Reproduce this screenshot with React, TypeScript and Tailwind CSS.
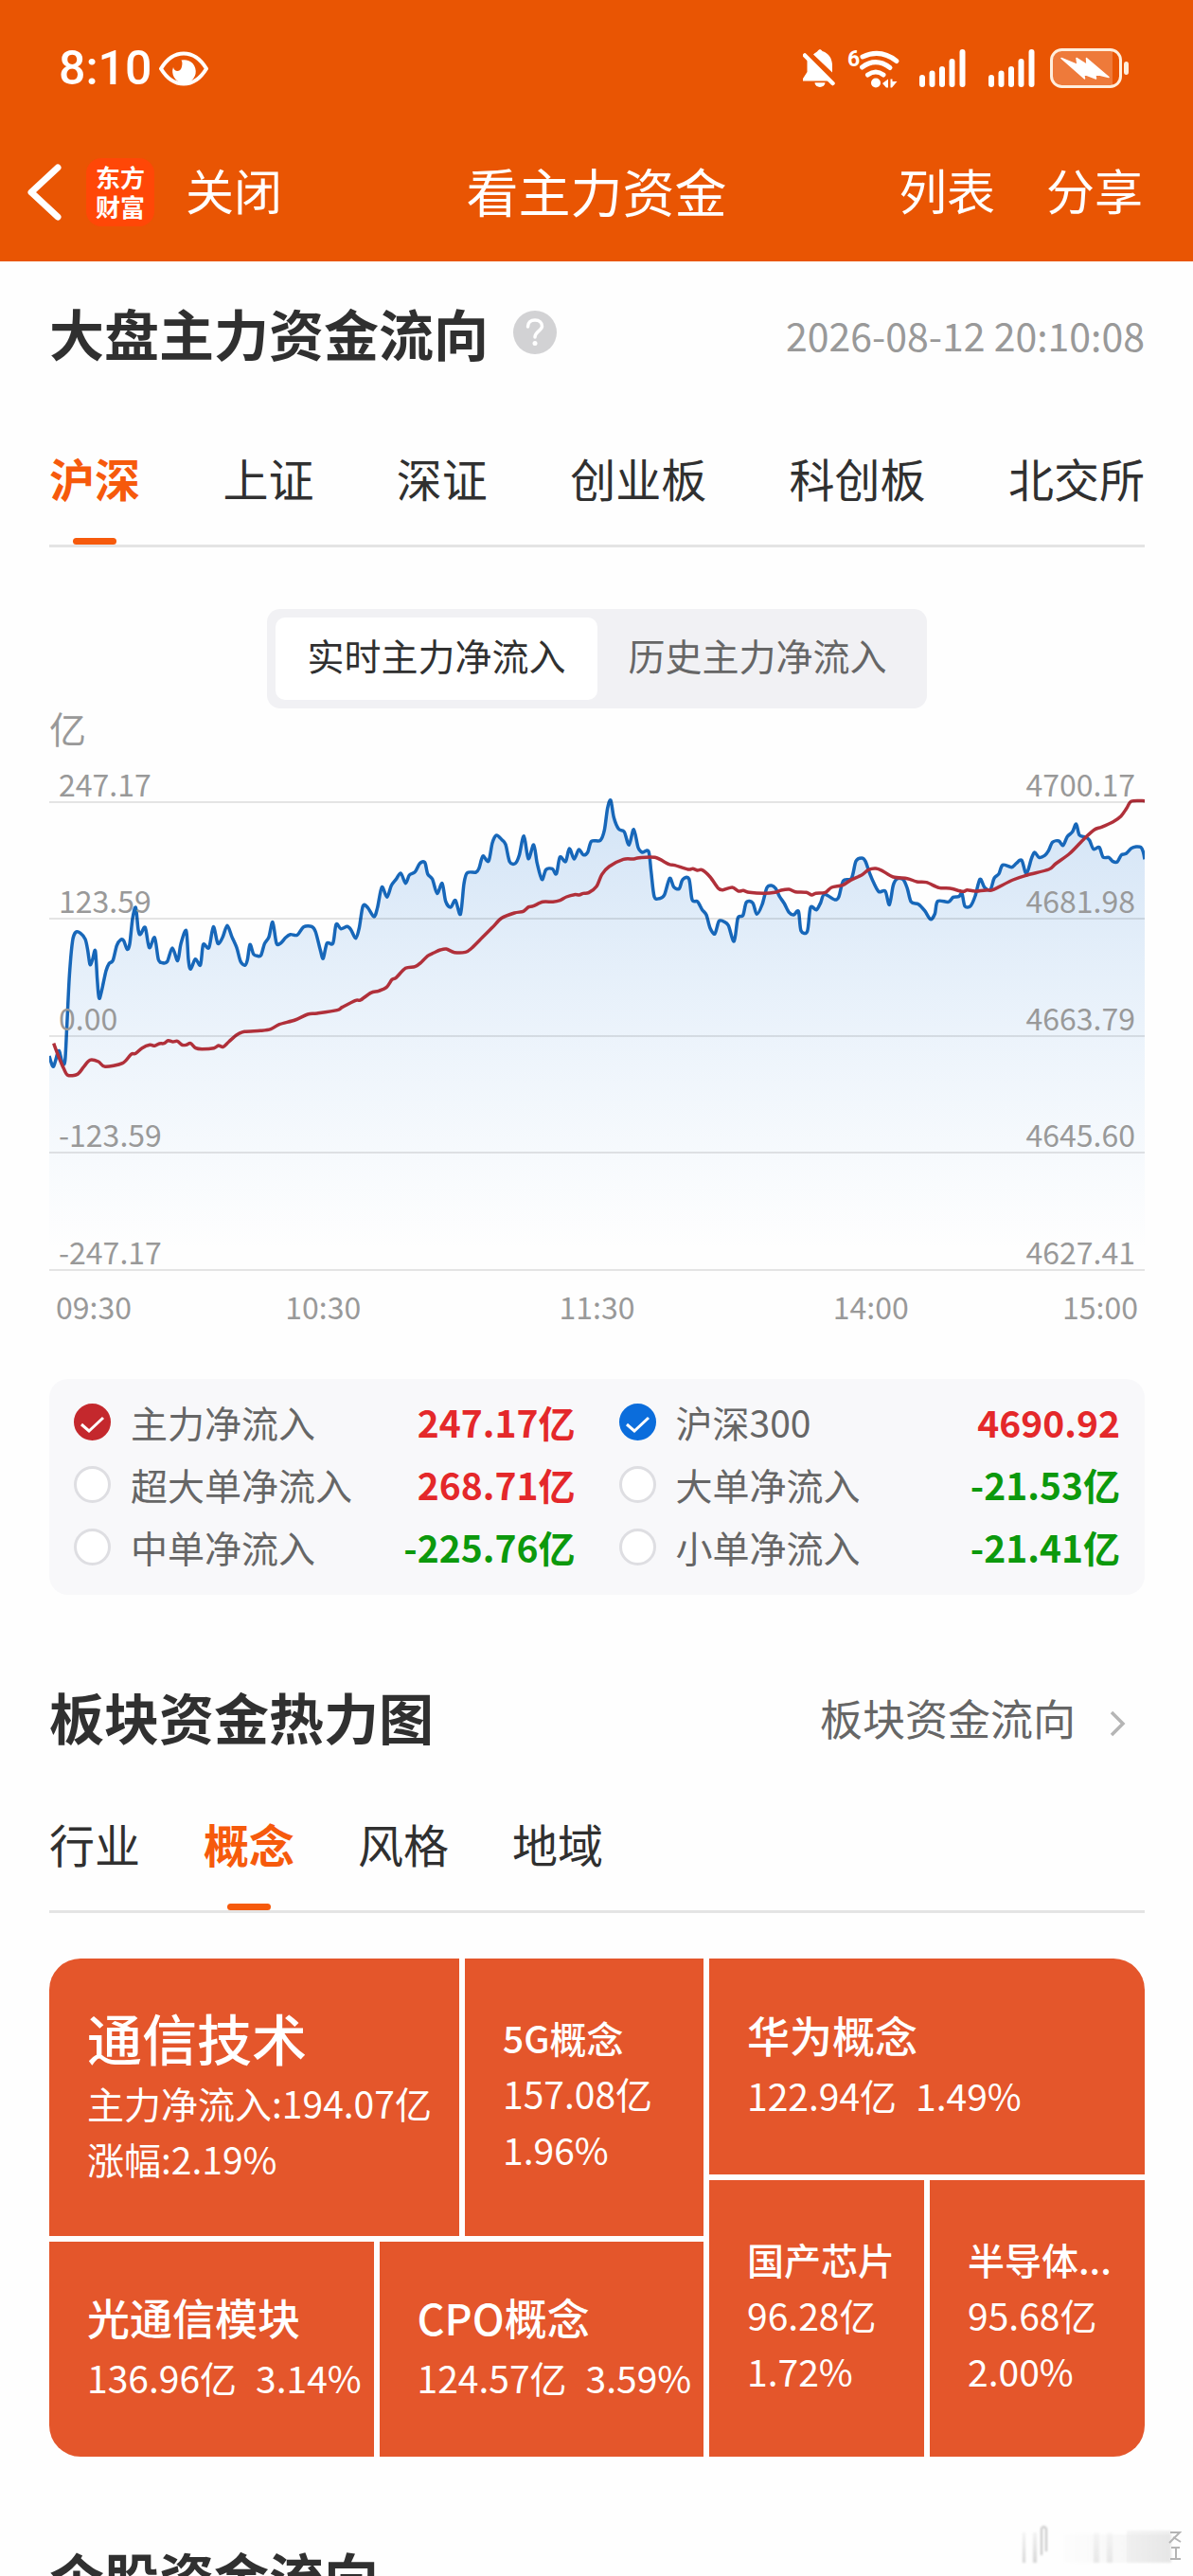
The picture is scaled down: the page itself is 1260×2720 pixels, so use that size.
import { useState } from "react";

type Point = [number, number];

const shift = (points: Point[], dx: number): Point[] => points.map(([x, y]) => [x + dx, y]);

const FUND_LINE: Point[] = [
  [66, 945], [72, 965], [80, 978], [92, 938], [98, 930], [108, 968], [116, 960], [122, 850], [130, 690], [140, 580],
  [150, 553], [165, 556], [180, 575], [188, 610], [195, 655], [203, 640], [212, 612], [218, 700], [222, 750], [226, 762],
  [234, 730], [246, 675], [256, 652], [268, 642], [280, 595], [292, 577], [302, 580], [313, 607], [321, 590], [330, 510],
  [340, 475], [348, 545], [355, 560], [370, 538], [383, 602], [400, 570], [412, 640], [425, 650], [440, 646], [456, 603],
  [473, 643], [483, 590], [500, 548], [507, 640], [514, 670], [529, 638], [545, 657], [554, 592], [572, 602], [586, 536],
  [600, 588], [615, 570], [630, 532], [645, 568], [660, 602], [672, 645], [686, 658], [694, 640], [702, 592], [713, 622],
  [725, 628], [737, 626], [748, 590], [762, 568], [774, 521], [786, 588], [800, 587], [815, 570], [830, 560], [852, 562],
  [872, 536], [898, 535], [910, 552], [925, 610], [934, 636], [946, 588], [965, 588], [975, 528], [990, 542], [1010, 535],
  [1022, 545], [1037, 572], [1048, 540], [1060, 470], [1075, 475], [1095, 504], [1106, 475], [1120, 410], [1136, 442],
  [1150, 405], [1165, 385], [1180, 366], [1195, 398], [1207, 372], [1225, 362], [1240, 335], [1256, 332],
  ...shift(
    [
      [65, 368], [80, 385], [95, 430], [111, 398], [122, 455], [138, 474], [153, 452], [169, 496], [180, 400], [190, 365],
      [218, 363], [228, 350], [240, 312], [258, 328], [270, 270], [283, 246], [300, 260], [312, 275], [325, 330], [343, 335],
      [355, 310], [370, 248], [384, 320], [401, 276], [412, 335], [427, 386], [440, 355], [460, 352], [473, 368], [484, 315],
      [502, 329], [514, 288], [529, 321], [544, 291], [558, 308], [572, 300], [584, 265], [612, 262], [625, 230], [635, 160],
      [645, 135], [655, 190], [670, 226], [688, 235], [703, 277], [718, 227], [732, 285], [745, 300], [765, 297], [773, 360],
      [783, 440], [800, 446], [815, 435], [832, 382], [845, 410], [862, 415], [873, 386], [893, 384], [903, 450], [920, 456],
      [935, 482], [948, 498], [960, 540], [975, 558], [988, 518], [1005, 520], [1018, 532], [1036, 582], [1048, 508],
      [1064, 500], [1075, 458], [1095, 460], [1108, 496], [1125, 465], [1140, 412], [1155, 405], [1168, 415], [1180, 440],
      [1195, 462], [1210, 490], [1225, 498], [1240, 487],
    ],
    1200,
  ),
  ...shift(
    [
      [48, 548], [68, 550], [78, 475], [97, 482], [110, 460], [122, 433], [155, 450], [168, 440], [182, 390], [208, 382],
      [222, 328], [240, 318], [252, 328], [265, 365], [280, 400], [295, 425], [315, 423], [328, 466], [340, 405], [352, 384],
      [372, 386], [385, 415], [397, 457], [420, 464], [440, 485], [458, 512], [472, 495], [481, 455], [515, 457], [530, 442],
      [548, 440], [558, 430], [567, 470], [585, 470], [600, 438], [615, 385], [630, 412], [648, 418], [660, 382], [675, 368],
      [687, 340], [715, 347], [730, 335], [747, 325], [762, 368], [778, 320], [788, 300], [802, 316], [820, 310], [832, 295],
      [845, 268], [865, 264], [878, 278], [892, 250], [908, 235], [920, 210], [930, 245], [950, 252], [962, 262], [975, 290],
      [993, 284], [1005, 315], [1023, 316], [1035, 328], [1050, 330], [1063, 308], [1078, 304], [1095, 287], [1110, 282],
      [1125, 284], [1132, 298], [1137, 322],
    ],
    2400,
  ),
];

const INDEX_LINE: Point[] = [
  [80, 905], [95, 945], [112, 985], [125, 1006], [155, 1003], [175, 980], [195, 958], [222, 963], [243, 979], [298, 968],
  [325, 940], [340, 937], [360, 920], [385, 910], [400, 913], [415, 906], [430, 905], [443, 896], [458, 900], [472, 898],
  [487, 910], [500, 910], [514, 905], [530, 920], [550, 923], [588, 920], [602, 912], [617, 916], [635, 900], [660, 878],
  [685, 868], [735, 865], [768, 860], [795, 845], [845, 831], [885, 813], [915, 810], [978, 800], [995, 790], [1037, 769],
  [1052, 768], [1085, 745], [1110, 739], [1135, 727], [1152, 703], [1165, 697], [1195, 667], [1225, 662], [1245, 648],
  ...shift(
    [
      [65, 628], [85, 618], [105, 609], [124, 606], [150, 617], [185, 616], [205, 603], [240, 568], [270, 538], [300, 508],
      [340, 492], [368, 487], [385, 473], [400, 470], [430, 457], [462, 457], [485, 452], [505, 441], [530, 434], [545, 435],
      [558, 430], [575, 428], [600, 408], [617, 370], [640, 345], [685, 322], [718, 321], [735, 317], [785, 316], [830, 338],
      [848, 341], [890, 354], [905, 352], [920, 357], [935, 356], [960, 378], [985, 413], [1000, 419], [1030, 411],
      [1050, 423], [1065, 421], [1085, 427], [1130, 430], [1165, 427], [1185, 420], [1210, 417], [1230, 425],
    ],
    1200,
  ),
  ...shift(
    [
      [65, 427], [82, 435], [95, 430], [125, 427], [145, 411], [180, 404], [205, 388], [240, 372], [262, 355], [285, 351],
      [305, 358], [340, 378], [385, 383], [415, 393], [445, 395], [485, 412], [520, 414], [560, 424], [575, 419], [600, 423],
      [640, 419], [655, 419], [720, 387], [765, 372], [833, 354], [855, 336], [900, 303], [945, 257], [978, 228], [1000, 220],
      [1037, 203], [1062, 185], [1080, 160], [1095, 138], [1137, 137],
    ],
    2400,
  ),
];

function smoothPath(points: Point[]): string {
  const k = 0.15;
  let d = `M${points[0][0]} ${points[0][1]}`;
  for (let i = 0; i < points.length - 1; i++) {
    const p0 = points[i - 1] ?? points[i];
    const p1 = points[i];
    const p2 = points[i + 1];
    const p3 = points[i + 2] ?? p2;
    d += `C${p1[0] + (p2[0] - p0[0]) * k} ${p1[1] + (p2[1] - p0[1]) * k} ${p2[0] - (p3[0] - p1[0]) * k} ${p2[1] - (p3[1] - p1[1]) * k} ${p2[0]} ${p2[1]}`;
  }
  return d;
}

const GRID_ROWS = [
  { left: "247.17", right: "4700.17", height: "h-[48px]" },
  { left: "123.59", right: "4681.98", height: "h-[123px]" },
  { left: "0.00", right: "4663.79", height: "h-[124px]" },
  { left: "-123.59", right: "4645.60", height: "h-[123px]" },
  { left: "-247.17", right: "4627.41", height: "h-[124px]" },
];

function EyeIcon() {
  return (
    <svg className="h-[37px] w-[52px]" viewBox="0 0 52 37" fill="none" aria-hidden="true">
      <path d="M2 18.500C9 7 17 2.500 26 2.500S43 7 50 18.500C43 30 35 34.500 26 34.500S9 30 2 18.500Z" stroke="white" strokeWidth="4" strokeLinejoin="round" />
      <path d="M23.500 9.500A12.300 12.300 0 1 1 15 17C16 22 22 22 23.500 18C24.500 15 25 11.500 23.500 9.500Z" fill="white" />
    </svg>
  );
}

function BellOffIcon() {
  return (
    <svg className="h-[40px] w-[34px]" viewBox="0 0 34 40" fill="white" aria-hidden="true">
      <path d="M2 6.500 31.500 36" stroke="white" strokeWidth="4.500" strokeLinecap="round" />
      <path d="M4.500 11V24L0 31V33.500H28Z" />
      <path d="M11 5.500C13 3.500 14.500 3 15.500 2 17-.3 19-.3 20.500 2 28 4.500 30.500 10 31 16V24.500Z" />
      <path d="M12.500 35.300H23.500A5.500 4.700 0 0 1 12.500 35.300Z" />
    </svg>
  );
}

function WifiIcon() {
  return (
    <svg className="h-[42px] w-[56px] overflow-visible" viewBox="0 0 56 42" fill="none" aria-hidden="true">
      <text x="0" y="19" fill="white" fontSize="23" fontWeight="700" fontFamily="Roboto, sans-serif">6</text>
      <g stroke="white" strokeWidth="5" strokeLinecap="round">
        <path d="M16 9Q35 0 52 13.500" />
        <path d="M15.500 20Q30 9 45 20.500" />
        <path d="M21.500 28Q30 22 38 28" />
      </g>
      <circle cx="30" cy="36.500" r="5" fill="white" />
      <path d="M37 37 43 32.500V41.500H41ZM45.500 32.500H47.500V35L52.500 35 47 41.500H45.500Z" fill="white" />
    </svg>
  );
}

function SignalIcon() {
  return (
    <svg className="h-[40px] w-[49px]" viewBox="0 0 49 40" fill="white" aria-hidden="true">
      <rect x="0" y="27" width="6" height="13" rx="3" />
      <rect x="10.500" y="22.500" width="6" height="17.500" rx="3" />
      <rect x="21" y="18" width="6" height="22" rx="3" />
      <rect x="31.500" y="10" width="6" height="30" rx="3" />
      <rect x="42.500" y="0" width="6" height="40" rx="3" />
    </svg>
  );
}

function BatteryIcon() {
  return (
    <svg className="h-[44px] w-[84px]" viewBox="0 0 84 44" fill="none" aria-hidden="true">
      <path d="M12 3H66V41H12A10 10 0 0 1 2 31V13A10 10 0 0 1 12 3Z" fill="white" fillOpacity="0.220" />
      <rect x="1.500" y="2.500" width="73" height="39" rx="11" stroke="#FFEEDC" strokeWidth="3" />
      <path d="M78 18Q78 15 80.500 15T83 18V26Q83 29 80.500 29T78 26Z" fill="#FFEEDC" />
      <path d="M12 11.500 29 18.500 28 11.500 39 18.500 38.500 11.500 62 31.500 47.500 28 48.500 33 35.500 28 36.500 33Z" fill="white" stroke="white" strokeWidth="1.500" strokeLinejoin="round" />
    </svg>
  );
}

function TabBar({ tabs, initial, layout, label }: { tabs: string[]; initial: string; layout: string; label: string }) {
  const [active, setActive] = useState(initial);
  return (
    <div role="tablist" aria-label={label} className={`flex border-b-[3px] border-[#e4e4e4] ${layout}`}>
      {tabs.map((tab) => {
        const on = tab === active;
        return (
          <button
            key={tab}
            type="button"
            role="tab"
            aria-selected={on}
            onClick={() => setActive(tab)}
            className={`relative pb-[41px] text-[48px] leading-[60px] whitespace-nowrap ${on ? "font-bold text-[#F65A0C]" : "text-[#303030]"}`}
          >
            {tab}
            {on && <span className="absolute bottom-0 left-1/2 h-[7px] w-[46px] -translate-x-1/2 rounded-full bg-[#F65A0C]" />}
          </button>
        );
      })}
    </div>
  );
}

type Series = { name: string; value: string; color: string; dot?: string };

const SERIES: Series[] = [
  { name: "主力净流入", value: "247.17亿", color: "text-[#E4282A]", dot: "checked:border-[#C4282D] checked:bg-[#C4282D]" },
  { name: "沪深300", value: "4690.92", color: "text-[#E4282A]", dot: "checked:border-[#0B6DDC] checked:bg-[#0B6DDC]" },
  { name: "超大单净流入", value: "268.71亿", color: "text-[#E4282A]" },
  { name: "大单净流入", value: "-21.53亿", color: "text-[#0C990C]" },
  { name: "中单净流入", value: "-225.76亿", color: "text-[#0C990C]" },
  { name: "小单净流入", value: "-21.41亿", color: "text-[#0C990C]" },
];

function SeriesToggle({ name, value, color, dot }: Series) {
  return (
    <label className="flex h-[66px] items-center">
      <span className="relative flex">
        <input
          type="checkbox"
          defaultChecked={Boolean(dot)}
          className={`peer size-[39px] appearance-none rounded-full border-[3px] border-[#dedee2] bg-white ${dot ?? "checked:border-[#C4282D] checked:bg-[#C4282D]"}`}
        />
        <svg className="pointer-events-none absolute inset-0 hidden size-[39px] peer-checked:block" viewBox="0 0 39 39" fill="none" aria-hidden="true">
          <path d="M8 22 16 29 31 15" stroke="white" strokeWidth="3" />
        </svg>
      </span>
      <span className="ml-[21px] text-[39px] text-[#666]">{name}</span>
      <span className={`ml-auto text-[39px] font-bold ${color}`}>{value}</span>
    </label>
  );
}

function Tile({ title, size, lines, inline }: { title: string; size: string; lines: string[]; inline?: boolean }) {
  return (
    <a href="#sector" className="flex min-w-0 flex-col justify-center bg-[#E4562B] pb-2 pl-[40px] whitespace-nowrap text-white">
      <span className={`font-medium ${size}`}>{title}</span>
      <span className={`flex text-[39px] leading-[59px] ${inline ? "gap-[20px]" : "flex-col"}`}>
        {lines.map((line) => (
          <span key={line}>{line}</span>
        ))}
      </span>
    </a>
  );
}

const LARGE = "text-[58px] leading-[79px]";
const MEDIUM = "text-[45px] leading-[68px]";
const SMALL = "text-[39px] leading-[59px]";

export default function App() {
  const [range, setRange] = useState("实时主力净流入");
  const fundPath = smoothPath(FUND_LINE);

  return (
    <div className="relative h-screen overflow-hidden bg-[#fefefe] font-['Noto_Sans_CJK_SC',sans-serif] text-[#303030]">
      <header className="bg-[#E95503] text-white">
        <div className="flex h-[144px] items-center pr-[67px] pl-[62px]">
          <time className="mr-[8px] text-[50px] leading-[60px] font-medium font-['Roboto',sans-serif]">8:10</time>
          <EyeIcon />
          <div className="ml-auto flex items-center">
            <BellOffIcon />
            <span className="ml-[13px] flex"><WifiIcon /></span>
            <span className="ml-[20px] flex"><SignalIcon /></span>
            <span className="ml-[24px] flex"><SignalIcon /></span>
            <span className="ml-[16px] flex"><BatteryIcon /></span>
          </div>
        </div>
        <nav className="grid h-[132px] grid-cols-[1fr_auto_1fr] items-center px-[28px] pb-3.5">
          <div className="flex items-center">
            <button type="button" aria-label="返回" className="flex">
              <svg className="h-[60px] w-[38px]" viewBox="0 0 38 60" fill="none" aria-hidden="true">
                <path d="M33 4 5 30 33 56" stroke="white" strokeWidth="7" strokeLinejoin="round" strokeLinecap="round" />
              </svg>
            </button>
            <span className="ml-[25px] flex size-[72px] flex-col items-center justify-center rounded-[16px] bg-[#FF4707] pb-[3px] text-[26px] leading-[31px] font-bold">
              <span>东方</span>
              <span>财富</span>
            </span>
            <button type="button" className="ml-[33px] pb-1.5 text-[51px] leading-[60px]">关闭</button>
          </div>
          <h1 className="pb-1.5 text-[55px] leading-[64px]">看主力资金</h1>
          <div className="flex justify-end gap-[54px] pr-[25px] pb-1.5 text-[51px] leading-[60px]">
            <button type="button">列表</button>
            <button type="button">分享</button>
          </div>
        </nav>
      </header>

      <main className="pr-[51px] pl-[52px]">
        <section>
          <div className="flex h-[150px] items-center">
            <h2 className="text-[58px] leading-[70px] font-bold">大盘主力资金流向</h2>
            <button type="button" aria-label="说明" className="ml-[26px] flex size-[46px] items-center justify-center rounded-full bg-[#d2d2d4]">
              <svg className="h-[30px] w-[20px]" viewBox="0 0 20 30" fill="none" aria-hidden="true">
                <path d="M2.500 9C2.500 4.500 5.500 2 10 2S17.500 4.500 17.500 8.500C17.500 13 10 14 10 20" stroke="white" strokeWidth="3.500" strokeLinecap="round" />
                <circle cx="10" cy="26.500" r="2.500" fill="white" />
              </svg>
            </button>
            <time className="ml-auto pt-1 text-[41px] leading-[60px] text-[#999]">2026-08-12 20:10:08</time>
          </div>

          <TabBar label="市场" layout="mt-[48px] justify-between" initial="沪深" tabs={["沪深", "上证", "深证", "创业板", "科创板", "北交所"]} />

          <div className="mt-[65px] flex justify-center">
            <div className="flex rounded-[14px] bg-[#F1F1F4] p-[9px]">
              {["实时主力净流入", "历史主力净流入"].map((item) => (
                <button
                  key={item}
                  type="button"
                  aria-pressed={item === range}
                  onClick={() => setRange(item)}
                  className={`h-[87px] rounded-[10px] px-[33px] pb-2 text-[39px] ${item === range ? "bg-white text-[#303030]" : "text-[#666]"}`}
                >
                  {item}
                </button>
              ))}
            </div>
          </div>

          <p className="h-[52px] text-[39px] leading-[40px] text-[#999]">亿</p>

          <div className="relative">
            <svg className="block h-[542px] w-full" viewBox="66 0 3471 1626" preserveAspectRatio="none" fill="none" role="img" aria-label="主力净流入走势图">
              <defs>
                <linearGradient id="area" x1="0" y1="135" x2="0" y2="1560" gradientUnits="userSpaceOnUse">
                  <stop offset="0" stopColor="#1A73D2" stopOpacity="0.190" />
                  <stop offset="1" stopColor="#4E9BEA" stopOpacity="0" />
                </linearGradient>
              </defs>
              <path d={`${fundPath}V1626H66Z`} fill="url(#area)" />
              <path d={fundPath} stroke="#1767B9" strokeWidth="3.500" strokeLinejoin="round" vectorEffect="non-scaling-stroke" />
              <path d={smoothPath(INDEX_LINE)} stroke="#B0303A" strokeWidth="3.500" strokeLinejoin="round" vectorEffect="non-scaling-stroke" />
            </svg>
            <div className="absolute inset-0 flex flex-col">
              {GRID_ROWS.map((row) => (
                <div key={row.left} className={`flex items-end justify-between border-b-2 border-black/10 px-[10px] pb-[3px] text-[32px] leading-[32px] text-[#999] ${row.height}`}>
                  <span>{row.left}</span>
                  <span>{row.right}</span>
                </div>
              ))}
            </div>
          </div>

          <div className="grid grid-cols-8 pt-[17px] text-center text-[32px] leading-[40px] text-[#999]">
            <span className="pl-[7px] text-left">09:30</span>
            <span className="col-span-2">10:30</span>
            <span className="col-span-2">11:30</span>
            <span className="col-span-2">14:00</span>
            <span className="pr-[7px] text-right">15:00</span>
          </div>

          <div className="mt-[57px] grid grid-cols-2 gap-x-[46px] rounded-[20px] bg-[#F8F8FA] px-[26px] pt-[12px] pb-[18px]">
            {SERIES.map((series) => (
              <SeriesToggle key={series.name} {...series} />
            ))}
          </div>
        </section>

        <section className="mt-[54px]">
          <div className="flex h-[148px] items-center justify-between">
            <h2 className="text-[58px] leading-[70px] font-bold">板块资金热力图</h2>
            <a href="#flow" className="flex items-center pt-1 pr-[20px] text-[45px] leading-[60px] text-[#666]">
              板块资金流向
              <svg className="mt-[12px] ml-[36px] h-[28px] w-[17px]" viewBox="0 0 17 28" fill="none" aria-hidden="true">
                <path d="M2 2 14 14 2 26" stroke="#b5b5b5" strokeWidth="3.500" />
              </svg>
            </a>
          </div>

          <TabBar label="板块" layout="mt-[30px] gap-[67px]" initial="概念" tabs={["行业", "概念", "风格", "地域"]} />

          <div className="mt-[48px] grid grid-cols-[691fr_460fr] gap-[6px] overflow-hidden rounded-[33px]">
            <div className="grid grid-rows-[293px_227px] gap-[6px]">
              <div className="grid grid-cols-[433fr_252fr] gap-[6px]">
                <Tile title="通信技术" size={LARGE} lines={["主力净流入:194.07亿", "涨幅:2.19%"]} />
                <Tile title="5G概念" size={SMALL} lines={["157.08亿", "1.96%"]} />
              </div>
              <div className="grid grid-cols-2 gap-[6px]">
                <Tile title="光通信模块" size={MEDIUM} lines={["136.96亿", "3.14%"]} inline />
                <Tile title="CPO概念" size={MEDIUM} lines={["124.57亿", "3.59%"]} inline />
              </div>
            </div>
            <div className="grid grid-rows-[228px_292px] gap-[6px]">
              <Tile title="华为概念" size={MEDIUM} lines={["122.94亿", "1.49%"]} inline />
              <div className="grid grid-cols-2 gap-[6px]">
                <Tile title="国产芯片" size={SMALL} lines={["96.28亿", "1.72%"]} />
                <Tile title="半导体..." size={SMALL} lines={["95.68亿", "2.00%"]} />
              </div>
            </div>
          </div>
        </section>

        <section className="mt-[52px]">
          <div className="flex h-[148px] items-center">
            <h2 className="text-[58px] leading-[70px] font-bold">个股资金流向</h2>
          </div>
        </section>
      </main>

      <svg className="absolute right-[8px] bottom-[10px] h-[46px] w-[180px]" viewBox="0 0 180 46" fill="none" aria-hidden="true">
        <defs>
          <linearGradient id="fade" x1="0" y1="0" x2="0" y2="46" gradientUnits="userSpaceOnUse">
            <stop offset="0" stopColor="#d4d4d4" stopOpacity="0.100" />
            <stop offset="1" stopColor="#cccccc" stopOpacity="0.900" />
          </linearGradient>
          <linearGradient id="fadeSide" x1="50" y1="0" x2="165" y2="0" gradientUnits="userSpaceOnUse">
            <stop offset="0" stopColor="#dddddd" stopOpacity="0.100" />
            <stop offset="1" stopColor="#d0d0d0" stopOpacity="0.500" />
          </linearGradient>
          <filter id="soft">
            <feGaussianBlur stdDeviation="1.200" />
          </filter>
        </defs>
        <g filter="url(#soft)">
          <rect x="8" y="10" width="3" height="32" fill="url(#fade)" />
          <rect x="19" y="10" width="4" height="32" fill="url(#fade)" />
          <path d="M28 34V6Q30 2 33 6V30" stroke="#c4c4c4" strokeWidth="2" />
          <rect x="52" y="12" width="113" height="30" fill="url(#fadeSide)" fillOpacity="0.500" />
          <rect x="83" y="10" width="6" height="32" fill="url(#fade)" fillOpacity="0.500" />
          <rect x="97" y="10" width="6" height="32" fill="url(#fade)" fillOpacity="0.500" />
          <rect x="118" y="8" width="47" height="34" fill="url(#fadeSide)" fillOpacity="0.700" />
        </g>
        <path d="M164 10H174L163 21M167 15 175 20M165 26H174M170 26V37M164 38H175" stroke="#b4b4b4" strokeWidth="2" />
      </svg>
    </div>
  );
}
